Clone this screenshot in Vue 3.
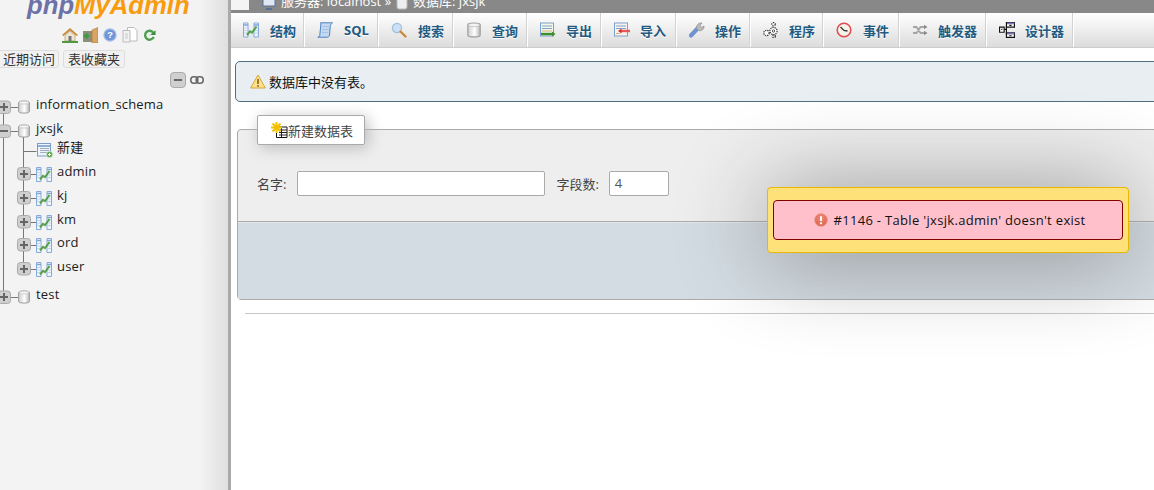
<script setup>
const rows = [
  { id: 'information_schema', kind: 'db', h: 24, sign: '+', up: false, down: true },
  { id: 'jxsjk', kind: 'db', h: 19, sign: '-', up: true, down: true, branch: true },
  { id: '新建', kind: 'new', h: 24 },
  { id: 'admin', kind: 'tbl', h: 24 },
  { id: 'kj', kind: 'tbl', h: 24 },
  { id: 'km', kind: 'tbl', h: 23 },
  { id: 'ord', kind: 'tbl', h: 24 },
  { id: 'user', kind: 'tbl', h: 28, last: true },
  { id: 'test', kind: 'db', h: 24, sign: '+', up: true, down: false },
]
const tabs = [
  { t: '结构', i: 'i-struct', wide: true }, { t: 'SQL', i: 'i-sql', wide: true }, { t: '搜索', i: 'i-search', wide: true },
  { t: '查询', i: 'i-db' }, { t: '导出', i: 'i-export' }, { t: '导入', i: 'i-import' },
  { t: '操作', i: 'i-wrench' }, { t: '程序', i: 'i-gears' }, { t: '事件', i: 'i-clock', wide: true },
  { t: '触发器', i: 'i-trigger' }, { t: '设计器', i: 'i-design' },
]
</script>

<template>
  <div class="page">
    <svg class="defs" width="0" height="0" aria-hidden="true">
      <defs>
        <linearGradient id="g-db" x1="0" x2="1"><stop offset="0" stop-color="#cccccc"/><stop offset=".55" stop-color="#fff"/><stop offset="1" stop-color="#b8b8b8"/></linearGradient>
        <radialGradient id="g-err" cx=".5" cy=".35" r=".7"><stop offset="0" stop-color="#f28a78"/><stop offset="1" stop-color="#d95f4d"/></radialGradient>
        <symbol id="i-db" viewBox="0 0 12 14"><path d="M.6 2.500C.6.500 11.400.500 11.400 2.500V11.500C11.400 13.600.6 13.600.6 11.500Z" fill="url(#g-db)" stroke="#9c9c9c"/><ellipse cx="6" cy="2.600" rx="5" ry="1.500" fill="#f4f4f4" stroke="#b5b5b5" stroke-width=".6"/></symbol>
        <symbol id="i-struct" viewBox="0 0 16 15"><path d="M.5.500h4.500v14H.5zM11 .5h4.500v14H11z" fill="#eef4fb" stroke="#86aadb"/><path d="M.5 2.500h4.500M11 2.500h4.500" stroke="#7fa5dc" stroke-width="1.500"/><path d="M1 5.500h4M1 8h4M1 10.500h4M11 5.500h4M11 8h4M11 10.500h4" stroke="#c3d4ea"/><path d="M4 12.500 7 8.800l2 1.400L13.500 4" fill="none" stroke="#55a04a" stroke-width="2"/></symbol>
        <symbol id="i-new" viewBox="0 0 16 15"><rect x=".5" y=".5" width="13" height="12.500" fill="#eef3fa" stroke="#7d9cc6"/><path d="M1 3h12" stroke="#8fb0da" stroke-width="2"/><path d="M3 5.500h9M3 7.500h9M3 9.500h7" stroke="#9dafc4"/><circle cx="12.500" cy="11.500" r="3.200" fill="#55a245" stroke="#fff" stroke-width=".6"/><path d="M10.800 11.500h3.400M12.500 9.800v3.400" stroke="#fff"/></symbol>
        <symbol id="i-sql" viewBox="0 0 16 16"><path d="M3.500.8h12c-1.500 1-2 2.200-2.200 3.500L12.500 13c-.2 1.500-1.200 2.200-2.500 2.200H.8c1.200-.2 1.900-.8 2-2L3.800 3c.1-1 0-1.600-.3-2.200Z" fill="#c3d9f2" stroke="#4f82c0"/><path d="M5.500 4.500h6.500M5.200 7.500h6.500M5 10.500h6" stroke="#a4c2e4"/></symbol>
        <symbol id="i-search" viewBox="0 0 16 16"><circle cx="6" cy="6" r="4.600" fill="#c9e0f7" stroke="#a4bdd6" stroke-width="1.200"/><path d="M9.500 9.500 14.500 14.500" stroke="#c98a3a" stroke-width="2.400" stroke-linecap="round"/></symbol>
        <symbol id="i-export" viewBox="0 0 16 16"><rect x=".5" y="1" width="13" height="13" fill="#f3f7e9" stroke="#7b9fcc"/><path d="M2 4h10M2 6.500h10" stroke="#7fa3cc"/><path d="M2 9h10" stroke="#d8b070"/><path d="M1 12h11" stroke="#3d8e2e" stroke-width="2.400"/><path d="M12 9.500 15.500 12 12 14.500Z" fill="#3d8e2e"/></symbol>
        <symbol id="i-import" viewBox="0 0 16 16"><rect x=".5" y="1" width="13" height="13" fill="#fbf3ee" stroke="#7b9fcc"/><path d="M2 4h10M2 6.500h10" stroke="#7fa3cc"/><path d="M2 11.500h4" stroke="#d8b070"/><path d="M7 9h9" stroke="#e45a5a" stroke-width="2.400"/><path d="M7.500 6.500 4 9l3.500 2.500Z" fill="#d42e2e"/></symbol>
        <symbol id="i-wrench" viewBox="0 0 16 16"><path d="M2 13.500 8.500 6.500" stroke="#6f93cf" stroke-width="4.200" stroke-linecap="round"/><path d="M7.500 6.500C7 3 10 .5 13 1L11 3.500l1.500 2L15 4c.5 3-2.500 5.500-5.500 4.500Z" fill="#b9b9b9" stroke="#8c8c8c" stroke-width=".7"/></symbol>
        <symbol id="i-gears" viewBox="0 0 16 16"><g fill="#fff" stroke="#3a3a3a" stroke-width="1.300" stroke-dasharray="1.300 .9"><circle cx="10.500" cy="9" r="3.600"/><circle cx="3.500" cy="11" r="2.700"/><circle cx="10.500" cy="2.200" r="1.700"/><circle cx="11" cy="14.300" r="1.400"/></g><circle cx="10.500" cy="9" r="1.200" fill="none" stroke="#555"/></symbol>
        <symbol id="i-clock" viewBox="0 0 16 16"><circle cx="8" cy="8" r="6.800" fill="#f6f2ec" stroke="#e04a4a" stroke-width="1.500"/><path d="M4.500 5 8 8.500l3.500.5" fill="none" stroke="#333" stroke-width="1.300"/></symbol>
        <symbol id="i-trigger" viewBox="0 0 16 16"><path d="M1 5h3.500l4 6h4M1 11h3.500l4-6h4" fill="none" stroke="#a5a5a5" stroke-width="1.800"/><path d="M12 2.800 15.500 5 12 7.200ZM12 8.800l3.500 2.200-3.500 2.200Z" fill="#8a8a8a"/></symbol>
        <symbol id="i-design" viewBox="0 0 14 14"><path d="M6.500.5h7v4h-7zM6.500 9.500h7v4h-7zM.5 4.500h4v4.500h-4z" fill="#fff" stroke="#111"/><path d="M7 .5h6.500v1.500H7zM7 9.500h6.500v1.500H7z" fill="#7c74b8"/><path d="M4.500 6.500h2M6.500 3v8" stroke="#111"/><path d="M9 3h2M9 12h2M2 6.500h1" stroke="#111"/></symbol>
      </defs>
    </svg>

    <aside class="side">
      <div class="logo"><span class="php">php</span><span class="my">MyAdmin</span></div>

      <div class="tools">
        <svg width="16" height="16" viewBox="0 0 16 16"><path d="M0 8 8 1l8 7-1.500 1L8 3.500 1.500 9Z" fill="#c98a3a"/><path d="M3 8.500 8 4l5 4.500V14H3Z" fill="#efe6d0" stroke="#a88c5c" stroke-width=".6"/><rect x="6.500" y="9" width="3" height="5" fill="#77777f"/><path d="M0 15h16" stroke="#4d9a3f" stroke-width="2"/></svg>
        <svg width="15" height="16" viewBox="0 0 15 16"><rect x="0" y="4" width="9" height="11" fill="#8a9078"/><path d="M9 3 15 .5V16H9Z" fill="#d9a566" stroke="#a87434" stroke-width=".6"/><path d="M1 9h5" stroke="#3d9b3d" stroke-width="2.400"/><path d="M4.500 5.500 .5 9l4 3.500Z" fill="#3d9b3d"/></svg>
        <svg width="14" height="14" viewBox="0 0 15 15"><circle cx="7.500" cy="7.500" r="6.600" fill="#6f97d8" stroke="#a9c1e8" stroke-width="1.200"/><text x="7.500" y="11" class="q">?</text></svg>
        <svg width="16" height="16" viewBox="0 0 16 16"><path d="M5.500 .5H12l3 3V14H5.500Z" fill="#fff" stroke="#bbb"/><path d="M1 3.500h7V15H1Z" fill="#f2f2f2" stroke="#bbb"/><path d="M3 6h3v6H3Z" fill="#ddd"/></svg>
        <svg width="13" height="14" viewBox="0 0 14 14"><path d="M11 4.500A4.800 4.800 0 1 0 11.500 9" fill="none" stroke="#4f9e4f" stroke-width="2.600"/><path d="M7.500 7h6v-5Z" fill="#3f8e3f"/><circle cx="7" cy="7" r="1.500" fill="#d9ead9"/></svg>
      </div>

      <div class="pills">
        <span class="pill first">近期访问</span>
        <span class="pill">表收藏夹</span>
      </div>

      <div class="collapse">
        <span class="boxbig"><i></i></span>
        <svg width="14" height="8" viewBox="0 0 14 8"><rect x=".8" y=".8" width="7" height="6.400" rx="3" fill="none" stroke="#666" stroke-width="1.500"/><rect x="6.200" y=".8" width="7" height="6.400" rx="3" fill="none" stroke="#666" stroke-width="1.500"/></svg>
      </div>

      <ul class="tree">
        <li v-for="r in rows" :key="r.id" class="row" :style="{ height: r.h + 'px' }">
          <svg class="lines" width="36" :height="r.h" :viewBox="`0 0 36 ${r.h}`" v-if="r.kind === 'db'">
            <path v-if="r.up" d="M3.500 0V6" stroke="#777" fill="none"/>
            <path v-if="r.down" :d="`M3.500 18V${r.h}`" stroke="#777" fill="none"/>
            <path v-if="r.branch" :d="`M23.500 17V${r.h}`" stroke="#777" fill="none"/>
            <path d="M10 12.500h8" stroke="#777"/>
            <rect x="-2.500" y="6" width="13" height="12.500" rx="3" fill="#cfcfcf" stroke="#aaa"/>
            <path d="M0 12h8" stroke="#666" stroke-width="2"/>
            <path v-if="r.sign === '+'" d="M4 8v8" stroke="#666" stroke-width="2"/>
            <use href="#i-db" x="18" y="5" width="12" height="14"/>
          </svg>
          <svg class="lines" width="57" :height="r.h" :viewBox="`0 0 57 ${r.h}`" v-else>
            <path :d="`M3.500 0V${r.h}`" stroke="#777" fill="none"/>
            <template v-if="r.kind === 'new'">
              <path :d="`M23.500 0V${r.h}M23.500 13.500h13`" stroke="#777" fill="none"/>
              <use href="#i-new" x="37" y="5" width="16" height="15"/>
            </template>
            <template v-else>
              <path :d="r.last ? 'M23.500 0V6' : `M23.500 0V${r.h}`" stroke="#777" fill="none"/>
              <path d="M30 12.500h7" stroke="#777"/>
              <rect x="17.500" y="5.500" width="13" height="12.500" rx="3" fill="#cfcfcf" stroke="#aaa"/>
              <path d="M20 12h8M24 8v8" stroke="#666" stroke-width="2"/>
              <use href="#i-struct" x="36" y="5" width="16" height="15"/>
            </template>
          </svg>
          <span class="label">{{ r.id }}</span>
        </li>
      </ul>
    </aside>

    <div class="split"></div>

    <main class="main">
      <div class="crumbs">
        <span class="corner"></span>
        <svg class="crumb-ic" width="14" height="10" viewBox="0 0 14 10"><rect x="1" y="-6" width="12" height="12" fill="#dfe7f3" stroke="#5a6f96"/><path d="M4 9h6" stroke="#5a6f96" stroke-width="2"/></svg>
        <span>服务器: localhost »</span>
        <svg class="crumb-ic" width="12" height="10" viewBox="0 0 12 10"><rect x="1" y="-4" width="10" height="13" rx="2" fill="#eee" stroke="#bbb"/></svg>
        <span>数据库: jxsjk</span>
      </div>

      <nav class="tabs">
        <a v-for="tab in tabs" :key="tab.t" class="tab" :class="{ wide: tab.wide }">
          <svg width="16" height="16"><use :href="'#' + tab.i" width="16" height="16"/></svg>
          <span>{{ tab.t }}</span>
        </a>
      </nav>

      <div class="notice">
        <svg width="16" height="15" viewBox="0 0 16 15"><path d="M8 1 15.300 14H.7Z" fill="#fbe38a" stroke="#d9a43a" stroke-linejoin="round"/><path d="M8 5v5" stroke="#8a5a1a" stroke-width="1.600"/><circle cx="8" cy="12" r=".9" fill="#8a5a1a"/></svg>
        <span>数据库中没有表。</span>
      </div>

      <section class="fieldset">
        <div class="legend">
          <svg width="17" height="16" viewBox="0 0 17 16"><path d="M5.500 5h10.500v10.500H5.500z" fill="#fff" stroke="#111"/><path d="M8 8h8M8 10.500h8M8 13h8M10.500 5v10" stroke="#222"/><path d="M5.500 0v11M0 5.500h11M1.500 1.500l8 8M9.500 1.500l-8 8" stroke="#f2c200" stroke-width="2"/></svg>
          <span>新建数据表</span>
        </div>
        <div class="form">
          <label>名字:</label>
          <span class="input name"></span>
          <label class="second">字段数:</label>
          <span class="input count">4</span>
        </div>
        <div class="foot"></div>
      </section>

      <hr class="rule" />

      <div class="dialog">
        <div class="err">
          <svg width="14" height="14" viewBox="0 0 14 14"><circle cx="7" cy="7" r="6.500" fill="url(#g-err)" stroke="#eba798"/><path d="M7 3.200v4.800" stroke="#fff" stroke-width="2"/><circle cx="7" cy="10.300" r="1.100" fill="#fff"/></svg>
          <span>#1146 - Table 'jxsjk.admin' doesn't exist</span>
        </div>
      </div>
    </main>
  </div>
</template>

<style>
html, body { margin: 0; background: #fff; }
</style>

<style scoped>
.page {
  position: relative;
  display: flex;
  width: 1154px;
  height: 490px;
  overflow: hidden;
  font: 13px "Open Sans", "Noto Sans CJK SC", sans-serif;
  color: #000;
}
.defs { position: absolute; }

.side {
  width: 228px;
  flex: none;
  background: linear-gradient(to right, #f3f3f3 0, #f3f3f3 200px, #dfdfdf 100%);
  overflow: hidden;
}
.logo {
  margin: -11px 0 0 27px;
  height: 36px;
  font: italic 700 25.700px/32px "Liberation Sans", sans-serif;
  white-space: nowrap;
}
.php { color: #6c72a8; }
.my { color: #f89c0e; }

.tools {
  display: flex;
  align-items: center;
  gap: 5px;
  margin-left: 62px;
  height: 20px;
}
.q { font: 700 10px "Liberation Sans", sans-serif; fill: #fff; text-anchor: middle; }

.pills {
  display: flex;
  gap: 4px;
  margin: 5px 0 0 -3px;
}
.pill {
  box-sizing: border-box;
  height: 18px;
  padding: 0 4px;
  line-height: 16px;
  border: 1px solid #ddd;
  border-radius: 3px;
  background: #f1f1f1;
  color: #333;
}
.pill.first { padding: 0 3px 0 5px; }

.collapse {
  display: flex;
  align-items: center;
  gap: 4px;
  height: 16px;
  margin: 4px 0 0 170px;
}
.boxbig {
  box-sizing: border-box;
  width: 16px;
  height: 16px;
  border: 1px solid #aaa;
  border-radius: 4px;
  background: #cfcfcf;
  display: flex;
  align-items: center;
  justify-content: center;
}
.boxbig i { width: 8px; height: 2px; background: #666; }

.tree { list-style: none; margin: 7px 0 0; padding: 0; }
.row { display: flex; align-items: flex-start; }
.lines { flex: none; display: block; overflow: hidden; }
.label { line-height: 18px; color: #1a1a1a; white-space: nowrap; letter-spacing: .17px; }

.split { width: 3px; flex: none; background: #a9a9a9; }

.main {
  flex: 1;
  min-width: 0;
  position: relative;
  background: #fff;
}
.crumbs {
  display: flex;
  align-items: flex-end;
  gap: 5px;
  height: 13px;
  background: #888;
  color: #fff;
  font-size: 13px;
  line-height: 13px;
  overflow: hidden;
  white-space: nowrap;
}
.corner { width: 18px; height: 10px; background: #f4f4f4; align-self: flex-start; margin-right: 8px; }
.crumb-ic { align-self: flex-start; flex: none; }
.crumbs span:not(.corner) { position: relative; top: -5px; }

.tabs {
  display: grid;
  grid-template-columns: 74px 74px 75px 74px 74px 75px 74px 73px 76px 87px 87px 1fr;
  height: 34px;
  background: linear-gradient(#fff, #dcdcdc);
  border-bottom: 1px solid #ccc;
}
.tab {
  display: flex;
  align-items: center;
  gap: 10px;
  padding-left: 12px;
  border-right: 1px solid #fff;
  box-shadow: inset -1px 0 0 #d2d2d2;
  color: #235a81;
  font-weight: 700;
  text-shadow: 0 1px 0 #fff;
  white-space: nowrap;
}
.tab.wide { gap: 11px; }

.notice {
  display: flex;
  align-items: center;
  gap: 3px;
  height: 39px;
  margin: 13px -20px 0 4px;
  padding-left: 14px;
  background: #e8eef1;
  border: 1px solid #4f6f80;
  border-radius: 5px;
  color: #111;
}

.fieldset {
  position: relative;
  margin: 27px -20px 0 6px;
  border: 1px solid #aaa;
  border-radius: 4px 0 0 4px;
  background: #eee;
}
.legend {
  position: absolute;
  left: 19px;
  top: -15px;
  box-sizing: border-box;
  width: 108px;
  height: 30px;
  display: flex;
  align-items: center;
  padding-left: 13px;
  background: #fff;
  border: 1px solid #aaa;
  border-radius: 2px;
  box-shadow: 3px 3px 15px #bbb;
  color: #444;
}
.form {
  display: flex;
  align-items: center;
  height: 25px;
  padding: 41px 0 25px 19px;
  border-bottom: 1px solid #aaa;
  color: #444;
}
.form label { margin-right: 11px; }
.form .second { margin: 0 10px 0 11px; }
.input {
  box-sizing: border-box;
  height: 25px;
  border: 1px solid #aaa;
  border-radius: 2px;
  background: #fff;
  color: #555;
  line-height: 23px;
  padding-left: 5px;
}
.name { width: 248px; }
.count { width: 60px; }
.foot {
  height: 77px;
  background: #d3dce3;
  box-shadow: inset 0 1px 0 #e4e9ee;
}

.rule {
  margin: 13px -20px 0 14px;
  border: 0;
  border-top: 1px solid #c8c8c8;
  height: 0;
}

.dialog {
  position: absolute;
  left: 536px;
  top: 187px;
  box-sizing: border-box;
  width: 362px;
  height: 66px;
  padding: 12px 5px;
  background: #ffe17a;
  border: 1px solid #e6b800;
  border-radius: 4px;
  box-shadow: 0 5px 90px #888;
}
.err {
  box-sizing: border-box;
  height: 40px;
  display: flex;
  align-items: center;
  justify-content: center;
  gap: 5px;
  padding-left: 4px;
  background: #ffc0cb;
  border: 1px solid #800000;
  border-radius: 4px;
  color: #111;
  letter-spacing: .32px;
}
</style>
